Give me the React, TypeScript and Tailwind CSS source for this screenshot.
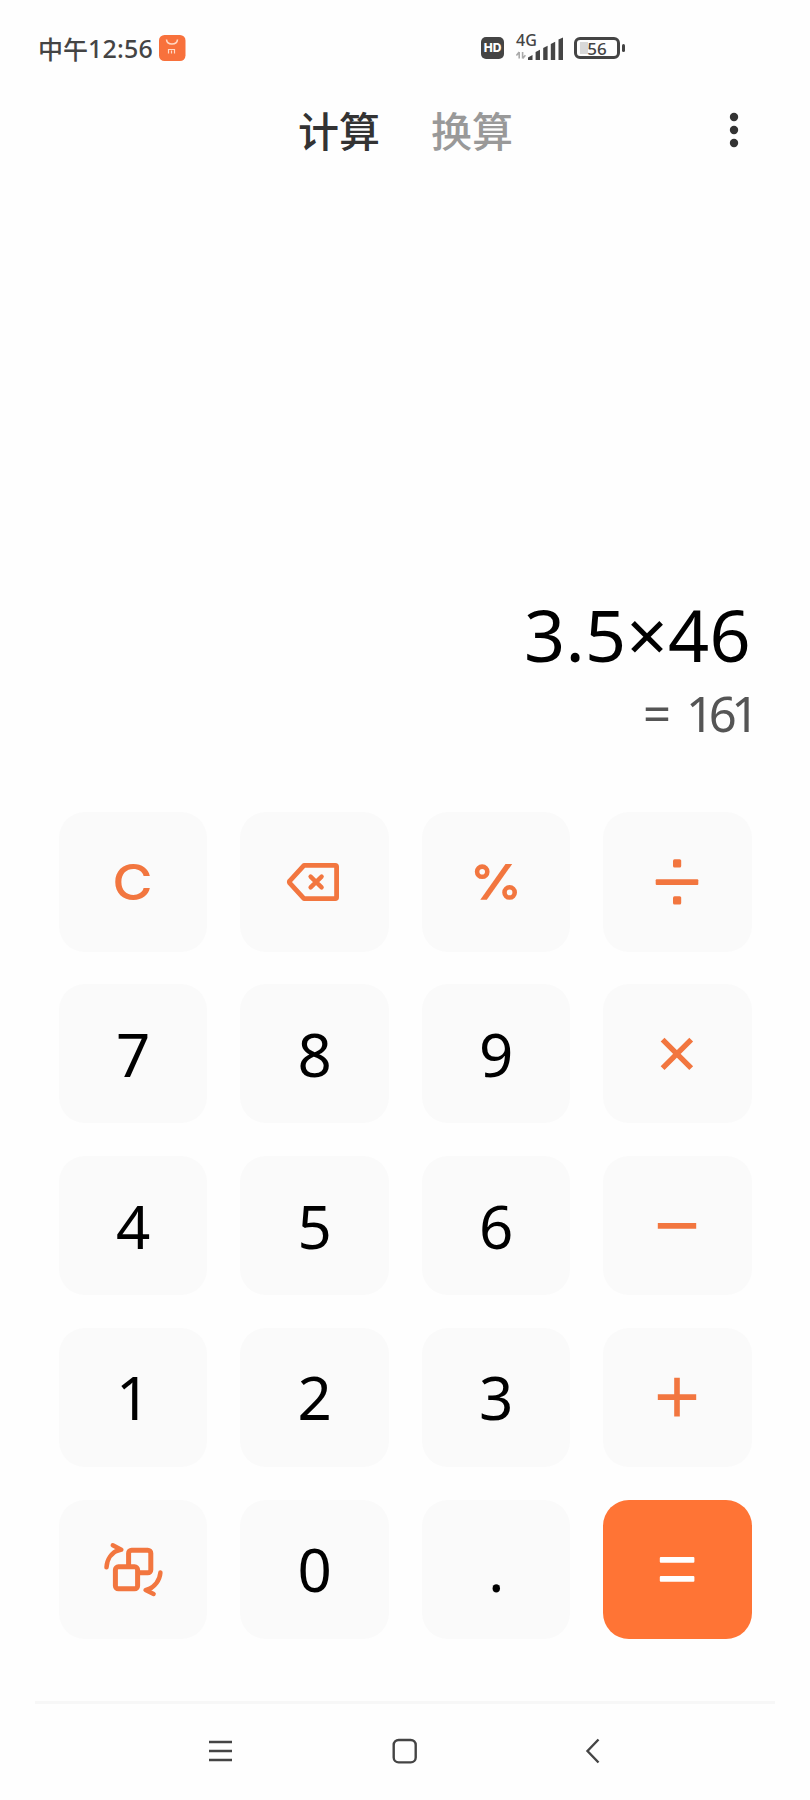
import type { ReactNode } from "react";
import clsx from "clsx";

interface KeyProps {
  label: string;
  icon?: ReactNode;
  variant?: "number" | "operator" | "equals";
}

const KeyIcon = ({ children }: { children: ReactNode }) => (
  <svg width="60" height="60" viewBox="0 0 60 60" fill="none" stroke="currentColor">
    {children}
  </svg>
);

const BackspaceIcon = () => (
  <KeyIcon>
    <path
      d="M20 13.3H51.2Q52.6 13.3 52.6 14.7V45.3Q52.6 46.7 51.2 46.7H20L5.8 31.2Q4.9 30 5.8 28.8Z"
      strokeWidth="4.8"
      strokeLinejoin="round"
    />
    <path d="M26.6 24.6 37.6 35.4M37.6 24.6 26.6 35.4" strokeWidth="4.4" strokeLinecap="round" />
  </KeyIcon>
);

const PercentIcon = () => (
  <KeyIcon>
    <circle cx="16.2" cy="19.7" r="5.1" strokeWidth="4.6" />
    <circle cx="43.6" cy="40.4" r="5.1" strokeWidth="4.6" />
    <path d="M14.3 47.8 39.5 12H46.2L20.8 47.8Z" fill="currentColor" stroke="none" />
  </KeyIcon>
);

const DivideIcon = () => (
  <KeyIcon>
    <g fill="currentColor" stroke="none">
      <rect x="8.7" y="27.2" width="42.6" height="5.7" rx="1" />
      <rect x="26" y="7.3" width="8.2" height="8.2" rx="1.5" />
      <rect x="26" y="44.3" width="8.2" height="8.2" rx="1.5" />
    </g>
  </KeyIcon>
);

const TimesIcon = () => (
  <KeyIcon>
    <path d="M15.6 15.6 44.2 44.2M44.2 15.6 15.6 44.2" strokeWidth="5.4" />
  </KeyIcon>
);

const MinusIcon = () => (
  <KeyIcon>
    <path d="M10.8 29.8H49.2" strokeWidth="5.7" />
  </KeyIcon>
);

const PlusIcon = () => (
  <KeyIcon>
    <path d="M10.8 30.1H49.2M30 10.8V49.4" strokeWidth="5.6" />
  </KeyIcon>
);

const EqualsIcon = () => (
  <KeyIcon>
    <g fill="currentColor" stroke="none">
      <rect x="12.8" y="18" width="34.6" height="5.8" rx="1" />
      <rect x="12.8" y="36.9" width="34.6" height="5.8" rx="1" />
    </g>
  </KeyIcon>
);

const ConvertIcon = () => (
  <KeyIcon>
    <g strokeWidth="5" strokeLinecap="round" strokeLinejoin="round">
      <rect x="25.6" y="11.2" width="22.2" height="22.6" rx="3" />
      <rect x="12.4" y="27.8" width="22.2" height="22" rx="3" fill="#fafafa" />
    </g>
    <g strokeWidth="4.5" strokeLinecap="round" strokeLinejoin="round">
      <path d="M3.5 28.3C4 20.5 8.5 13.5 16.3 10.7M9.8 6.3 18.3 10.7 12 12.6" />
      <path d="M57.4 33.6C56.8 41 52 48.2 44 51M50.6 55 42.6 51 48.6 48.8" />
    </g>
  </KeyIcon>
);

const keys: KeyProps[] = [
  { label: "C", variant: "operator" },
  { label: "删除", icon: <BackspaceIcon />, variant: "operator" },
  { label: "%", icon: <PercentIcon />, variant: "operator" },
  { label: "÷", icon: <DivideIcon />, variant: "operator" },
  { label: "7" },
  { label: "8" },
  { label: "9" },
  { label: "×", icon: <TimesIcon />, variant: "operator" },
  { label: "4" },
  { label: "5" },
  { label: "6" },
  { label: "−", icon: <MinusIcon />, variant: "operator" },
  { label: "1" },
  { label: "2" },
  { label: "3" },
  { label: "+", icon: <PlusIcon />, variant: "operator" },
  { label: "切换", icon: <ConvertIcon />, variant: "operator" },
  { label: "0" },
  { label: "." },
  { label: "=", icon: <EqualsIcon />, variant: "equals" },
];

const Key = ({ label, icon, variant = "number" }: KeyProps) => (
  <button
    aria-label={label}
    className={clsx(
      "flex items-center justify-center rounded-[26px]",
      variant === "number" && "bg-[#fafafa] pl-px text-[60px] leading-none font-[450] text-black",
      variant === "operator" && "bg-[#fafafa] text-[#f2763f]",
      variant === "equals" && "bg-[#ff7435] text-white"
    )}
  >
    {icon ??
      (variant === "operator" ? (
        <span className="scale-x-110 font-['Inter'] text-[50px] leading-none font-medium">
          {label}
        </span>
      ) : (
        label
      ))}
  </button>
);

const StatusBar = () => (
  <div className="flex h-24 items-center pl-[38px] text-[#444]">
    <div className="flex w-[443px] items-center">
      <span className="font-['Noto_Sans_CJK_SC',sans-serif] text-[25px] leading-none font-medium">
        中午
      </span>
      <span className="text-[25px] leading-none font-medium tracking-[0.2px]">12:56</span>
      <svg className="ml-1.5" width="27" height="26" viewBox="0 0 27 26" fill="none">
        <rect width="26.5" height="26" rx="5.5" fill="#f8713c" />
        <path d="M7.5 4.5C8 10.5 18 10.5 18.5 4.5" stroke="#ffd9c6" strokeWidth="1.6" />
        <path d="M9.5 18.5V14.5H15.5V18.5M12.5 15.5V18.5" stroke="#ffd9c6" strokeWidth="1.2" />
      </svg>
    </div>

    <span className="flex h-[22px] w-[23px] items-center justify-center rounded-[5px] bg-[#444] font-['Inter'] text-[12px] leading-none font-extrabold text-white">
      HD
    </span>

    <div className="relative ml-3 h-[26px] w-[48px]">
      <span className="absolute -top-[3px] left-0 text-[16px] leading-none font-medium">4G</span>
      <svg width="48" height="26" viewBox="0 0 48 26" fill="#444">
        <path d="M12 25V22.5L16.5 20V25Z" />
        <path d="M19.6 25V17L24 14.8V25Z" />
        <path d="M27.2 25V13L31.6 10.8V25Z" />
        <path d="M34.8 25V9L39.2 6.8V25Z" />
        <path d="M42.5 25V4.6L47 2.4V25Z" />
        <path
          d="M3.2 17V23.5M0.4 20.5 3.2 17M6.6 23.5V17M9.4 20.2 6.6 23.5"
          stroke="#aaa"
          strokeWidth="1.6"
          fill="none"
        />
      </svg>
    </div>

    <div className="ml-2.5 flex items-center gap-0.5">
      <div className="relative flex h-[22px] w-[46px] items-center justify-center rounded-[6px] border-3 border-[#444]">
        <span className="absolute left-[3px] h-3 w-2 bg-[#d8d8d8]" />
        <span className="relative text-[17px] leading-none font-medium">56</span>
      </div>
      <span className="h-2 w-[3px] rounded-sm bg-[#444]" />
    </div>
  </div>
);

const Header = () => (
  <div className="flex h-[67px] items-center pl-[298px]">
    <div className="flex gap-[51px] font-['Noto_Sans_CJK_SC',sans-serif] text-[41px] leading-none font-medium">
      <span className="text-[#333]">计算</span>
      <span className="text-[#999]">换算</span>
    </div>
    <svg className="ml-[216px]" width="10" height="36" viewBox="0 0 10 36" fill="#333">
      <circle cx="5" cy="5" r="4.2" />
      <circle cx="5" cy="18" r="4.2" />
      <circle cx="5" cy="31" r="4.2" />
    </svg>
  </div>
);

const Display = () => (
  <div className="flex h-[649px] flex-col items-end pt-[433px] pr-[59px]">
    <div className="text-[72px] leading-[76px] tracking-[0.3px] text-black">3.5×46</div>
    <div className="mt-[11px] -mr-[3px] flex text-[49px] leading-[60px] text-[#555]">
      <span>=</span>
      <span className="ml-[15px] tracking-[-5.4px]">161</span>
    </div>
  </div>
);

const NavBar = () => (
  <div className="mx-[35px] mt-[62px] h-[96px] border-t-3 border-[#f7f7f7] pt-[34px]">
    <svg className="ml-[174px]" width="392" height="26" viewBox="0 0 392 26" fill="none" stroke="#444" strokeWidth="2.4">
      <path d="M0 4H23M0 13H23M0 22H23" />
      <rect x="184.7" y="2" width="22" height="22.4" rx="5" />
      <path d="M389.5 1.5 378.5 13 389.5 24.5" />
    </svg>
  </div>
);

export default function App() {
  return (
    <div className="h-[1800px] w-[810px] overflow-hidden bg-[#fefefe] font-['Noto_Sans','Noto_Sans_CJK_SC',sans-serif]">
      <StatusBar />
      <Header />
      <Display />
      <div className="mx-[58.5px] grid auto-rows-[139.5px] grid-cols-4 gap-x-[33px] gap-y-[32.4px]">
        {keys.map((key) => (
          <Key key={key.label} {...key} />
        ))}
      </div>
      <NavBar />
    </div>
  );
}
